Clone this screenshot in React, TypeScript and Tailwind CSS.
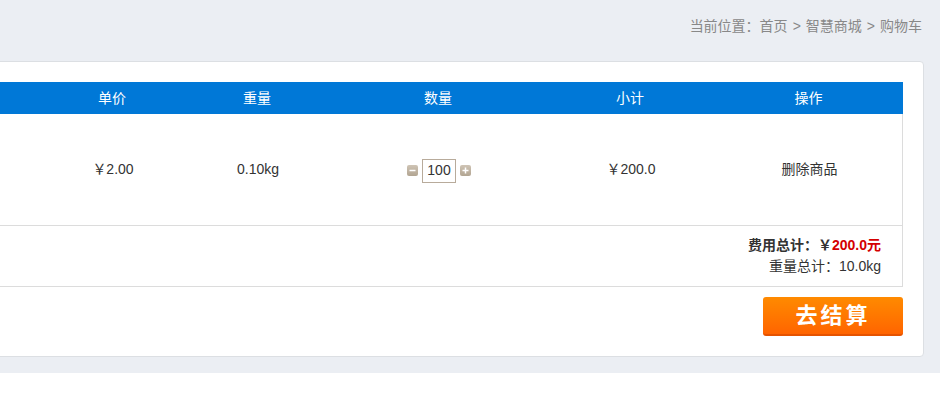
import React from "react"

const font = { fontFamily: '"Liberation Sans", "Noto Sans CJK SC", sans-serif' }

function QtyButton({ plus }: { plus?: boolean }) {
  return (
    <span className="flex h-[11px] w-[11px] items-center justify-center rounded-[2px] bg-gradient-to-b from-[#cfc4b5] to-[#b2a592]">
      <svg width="7" height="7" viewBox="0 0 7 7">
        <rect x="0.5" y="2.75" width="6" height="1.5" fill="#fff" />
        {plus && <rect x="2.75" y="0.5" width="1.5" height="6" fill="#fff" />}
      </svg>
    </span>
  )
}

export default function App() {
  const cols = "grid grid-cols-[339px_144px_146px_216px_168px_189px]"

  return (
    <div className="min-h-screen bg-white text-[#333]" style={font}>
      <div className="bg-[#ebeef3] pb-[16px]">
        {/* breadcrumb */}
        <div className="flex h-[61px] justify-end pr-[18px] pt-[16px] text-[14px] leading-[20px] text-[#888]">
          当前位置：首页<span className="px-[5px]">&gt;</span>智慧商城<span className="px-[5px]">&gt;</span>购物车
        </div>

        {/* cart card */}
        <div className="ml-[-300px] w-[1224px] rounded-[4px] border border-[#dcdfe3] bg-white pb-[20px] pr-[20px] pt-[20px]">
          <div className={`${cols} h-[32px] items-center bg-[#0078d7] text-center text-[14px] text-white`}>
            <div />
            <div>单价</div>
            <div>重量</div>
            <div>数量</div>
            <div>小计</div>
            <div>操作</div>
          </div>

          <div className="border-x border-[#dcdcdc]">
            <div className={`${cols} h-[112px] items-center border-b border-[#dcdcdc] text-center text-[14px]`}>
              <div />
              <div>￥2.00</div>
              <div>0.10kg</div>
              <div className="flex items-center justify-center gap-[4px] pt-[2px]">
                <QtyButton />
                <span className="flex h-[24px] w-[34px] items-center justify-center border border-[#b8ab9b] text-[14px]">
                  100
                </span>
                <QtyButton plus />
              </div>
              <div>￥200.0</div>
              <div>删除商品</div>
            </div>

            <div className="flex h-[61px] flex-col items-end justify-center border-b border-[#dcdcdc] pr-[21px] text-[14px] leading-[21px]">
              <div className="font-bold">
                费用总计：￥<span className="text-[#d40000]">200.0元</span>
              </div>
              <div>重量总计：10.0kg</div>
            </div>
          </div>

          <div className="mt-[10px] flex justify-end">
            <button className="h-[39px] w-[140px] rounded-[3px] border-b-2 border-[#e55300] bg-gradient-to-b from-[#ff8a00] to-[#ff6400] text-[22px] font-bold tracking-[3px] text-white">
              去结算
            </button>
          </div>
        </div>
      </div>
    </div>
  )
}
